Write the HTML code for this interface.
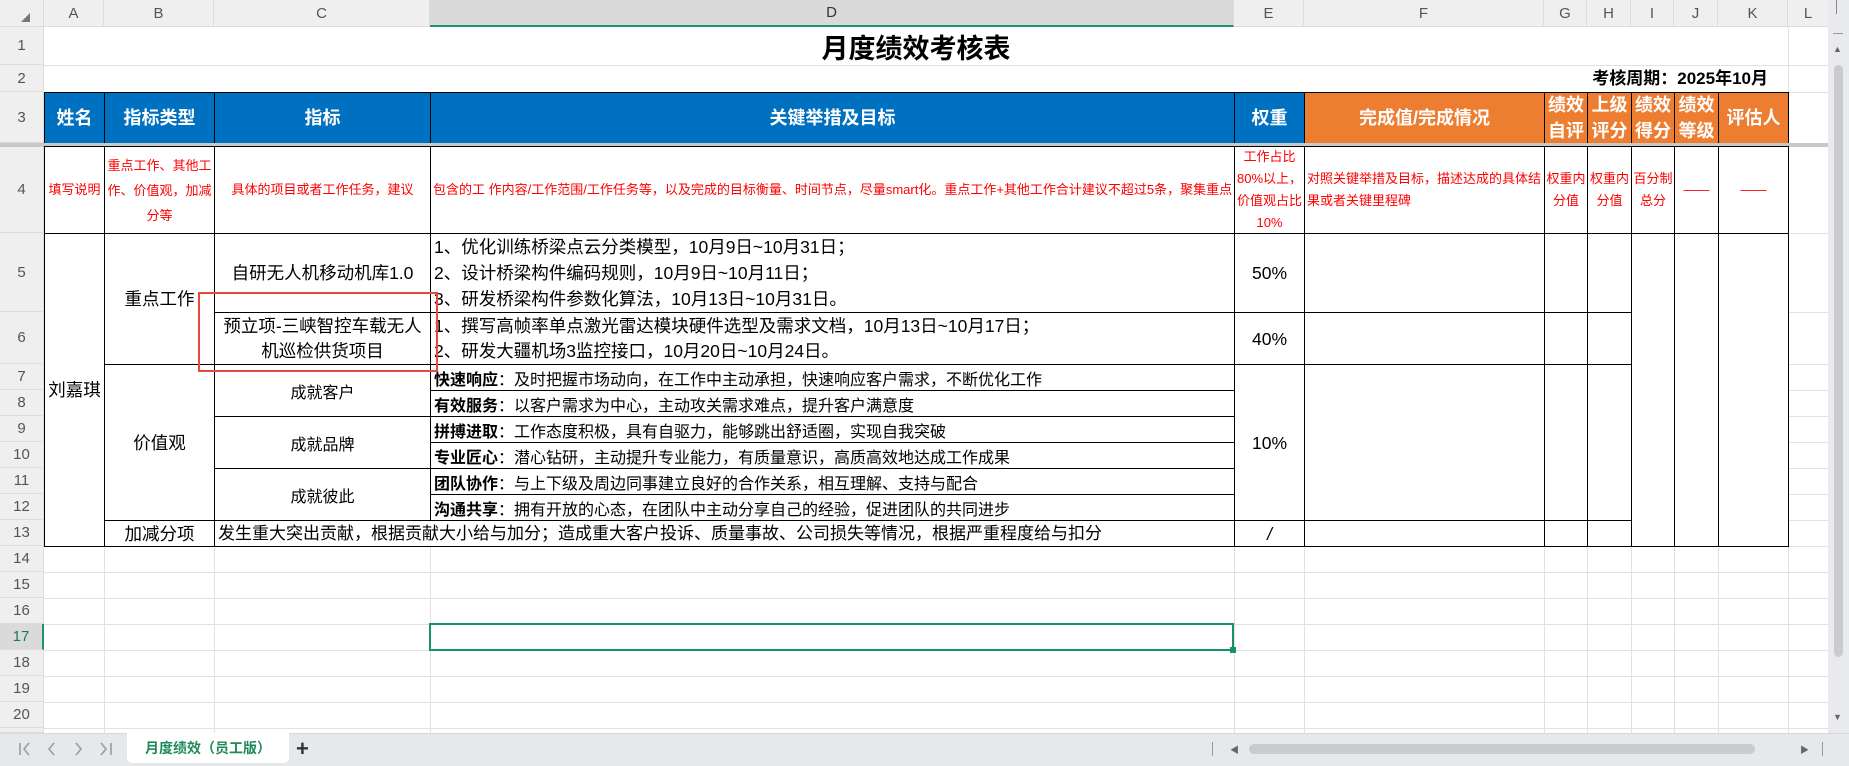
<!DOCTYPE html>
<html><head><meta charset="utf-8"><style>
*{margin:0;padding:0}
body{width:1849px;height:765px;overflow:hidden;background:#fff;position:relative;font-family:"Liberation Sans","Noto Sans CJK SC",sans-serif;color:#000}
.a{position:absolute}
.vl{position:absolute;top:27px;height:706px;width:1px;background:#e1e1e1}
.hl{position:absolute;left:0;width:1828px;height:1px;background:#e1e1e1}
.ch{position:absolute;top:0;height:27px;background:#efefef;color:#555;font-size:15px;display:flex;align-items:center;justify-content:center;border-right:1px solid #dcdcdc;box-sizing:border-box;border-bottom:1px solid #dcdcdc}
.rh{position:absolute;left:0;width:44px;background:#efefef;color:#555;font-size:15px;display:flex;align-items:center;justify-content:center;border-bottom:1px solid #dcdcdc;box-sizing:border-box;border-right:1px solid #dcdcdc}
.c{position:absolute;box-sizing:border-box;border:1px solid #000;display:flex;align-items:center;justify-content:center;text-align:center;overflow:hidden;background:#fff;white-space:nowrap}
.w{white-space:normal}
.b{background:#0070c0;color:#fff;font-weight:bold;font-size:18px;line-height:26px}
.o{background:#ed7d31;color:#fff;font-weight:bold;font-size:18px;line-height:26px}
.r{color:#f00;font-size:13px;line-height:22px}
.t{font-size:17.5px;line-height:26px}
.l{justify-content:flex-start;text-align:left;padding-left:4px}
.s{font-size:16px}
</style></head><body>
<div class="vl" style="left:104px"></div><div class="vl" style="left:214px"></div><div class="vl" style="left:430px"></div><div class="vl" style="left:1234px"></div><div class="vl" style="left:1304px"></div><div class="vl" style="left:1544px"></div><div class="vl" style="left:1587px"></div><div class="vl" style="left:1631px"></div><div class="vl" style="left:1674px"></div><div class="vl" style="left:1718px"></div><div class="vl" style="left:1788px"></div>
<div class="hl" style="top:65px"></div><div class="hl" style="top:92px"></div>
<div class="hl" style="top:572px"></div><div class="hl" style="top:598px"></div><div class="hl" style="top:624px"></div><div class="hl" style="top:650px"></div><div class="hl" style="top:676px"></div><div class="hl" style="top:702px"></div><div class="hl" style="top:728px"></div>
<div class="hl" style="top:390px;left:1788px;width:40px"></div><div class="hl" style="top:416px;left:1788px;width:40px"></div><div class="hl" style="top:442px;left:1788px;width:40px"></div><div class="hl" style="top:468px;left:1788px;width:40px"></div><div class="hl" style="top:494px;left:1788px;width:40px"></div><div class="hl" style="top:520px;left:1788px;width:40px"></div><div class="hl" style="top:546px"></div><div class="hl" style="top:233px;left:1788px;width:40px"></div><div class="hl" style="top:312px;left:1788px;width:40px"></div><div class="hl" style="top:364px;left:1788px;width:40px"></div>

<div class="ch" style="left:0;width:44px"><span style="font-size:9px;color:#777;margin:8px 0 0 8px">◢</span></div>
<div class="ch" style="left:44px;width:60px">A</div>
<div class="ch" style="left:104px;width:110px">B</div>
<div class="ch" style="left:214px;width:216px">C</div>
<div class="ch" style="left:430px;width:804px;background:#dadada;border-bottom:2px solid #1e9467;color:#333">D</div>
<div class="ch" style="left:1234px;width:70px">E</div>
<div class="ch" style="left:1304px;width:240px">F</div>
<div class="ch" style="left:1544px;width:43px">G</div>
<div class="ch" style="left:1587px;width:44px">H</div>
<div class="ch" style="left:1631px;width:43px">I</div>
<div class="ch" style="left:1674px;width:44px">J</div>
<div class="ch" style="left:1718px;width:70px">K</div>
<div class="ch" style="left:1788px;width:40px;border-right:none">L</div>
<div class="rh" style="top:27px;height:38px">1</div>
<div class="rh" style="top:65px;height:27px">2</div>
<div class="rh" style="top:92px;height:51px">3</div>
<div class="rh" style="top:147px;height:86px">4</div>
<div class="rh" style="top:233px;height:79px">5</div>
<div class="rh" style="top:312px;height:52px">6</div>
<div class="rh" style="top:364px;height:26px">7</div>
<div class="rh" style="top:390px;height:26px">8</div>
<div class="rh" style="top:416px;height:26px">9</div>
<div class="rh" style="top:442px;height:26px">10</div>
<div class="rh" style="top:468px;height:26px">11</div>
<div class="rh" style="top:494px;height:26px">12</div>
<div class="rh" style="top:520px;height:26px">13</div>
<div class="rh" style="top:546px;height:26px">14</div>
<div class="rh" style="top:572px;height:26px">15</div>
<div class="rh" style="top:598px;height:26px">16</div>
<div class="rh" style="top:624px;height:26px;background:#dadada;color:#1e7a55;border-right:2px solid #1e9467">17</div>
<div class="rh" style="top:650px;height:26px">18</div>
<div class="rh" style="top:676px;height:26px">19</div>
<div class="rh" style="top:702px;height:26px">20</div>
<div class="rh" style="top:728px;height:5px"></div>

<div class="a" style="left:44px;top:27px;width:1744px;height:38px;display:flex;align-items:center;justify-content:center;font-size:27px;font-weight:bold;background:#fff">月度绩效考核表</div>
<div class="a" style="left:44px;top:66px;width:1744px;height:26px;background:#fff"></div>
<div class="a" style="left:1500px;top:66px;width:268px;height:26px;text-align:right;font-size:17px;font-weight:bold;line-height:26px">考核周期：2025年10月</div>

<div class="c b" style="left:44px;top:92px;width:61px;height:52px">姓名</div>
<div class="c b" style="left:104px;top:92px;width:111px;height:52px">指标类型</div>
<div class="c b" style="left:214px;top:92px;width:217px;height:52px">指标</div>
<div class="c b" style="left:430px;top:92px;width:805px;height:52px">关键举措及目标</div>
<div class="c b" style="left:1234px;top:92px;width:71px;height:52px">权重</div>
<div class="c o" style="left:1304px;top:92px;width:241px;height:52px">完成值/完成情况</div>
<div class="c o" style="left:1544px;top:92px;width:44px;height:52px">绩效<br>自评</div>
<div class="c o" style="left:1587px;top:92px;width:45px;height:52px">上级<br>评分</div>
<div class="c o" style="left:1631px;top:92px;width:44px;height:52px">绩效<br>得分</div>
<div class="c o" style="left:1674px;top:92px;width:45px;height:52px">绩效<br>等级</div>
<div class="c o" style="left:1718px;top:92px;width:71px;height:52px">评估人</div>
<div class="a" style="left:0;top:143px;width:1828px;height:4px;background:#c8c8c8"></div>

<div class="c r" style="left:44px;top:146px;width:61px;height:88px">填写说明</div>
<div class="c r w" style="left:104px;top:146px;width:111px;height:88px;line-height:25px">重点工作、其他工作、价值观，加减分等</div>
<div class="c r" style="left:214px;top:146px;width:217px;height:88px">具体的项目或者工作任务，建议</div>
<div class="c r l w" style="left:430px;top:146px;width:805px;height:88px;padding-left:2px">包含的工 作内容/工作范围/工作任务等，以及完成的目标衡量、时间节点，尽量smart化。重点工作+其他工作合计建议不超过5条，聚集重点</div>
<div class="c r" style="left:1234px;top:146px;width:71px;height:88px">工作占比<br>80%以上，<br>价值观占比<br>10%</div>
<div class="c r l w" style="left:1304px;top:146px;width:241px;height:88px;padding-left:2px">对照关键举措及目标，描述达成的具体结果或者关键里程碑</div>
<div class="c r" style="left:1544px;top:146px;width:44px;height:88px">权重内<br>分值</div>
<div class="c r" style="left:1587px;top:146px;width:45px;height:88px">权重内<br>分值</div>
<div class="c r" style="left:1631px;top:146px;width:44px;height:88px">百分制<br>总分</div>
<div class="c r" style="left:1674px;top:146px;width:45px;height:88px">——</div>
<div class="c r" style="left:1718px;top:146px;width:71px;height:88px">——</div>

<div class="c t" style="left:44px;top:233px;width:61px;height:314px">刘嘉琪</div>
<div class="c t" style="left:104px;top:233px;width:111px;height:132px">重点工作</div>
<div class="c t" style="left:104px;top:364px;width:111px;height:157px">价值观</div>
<div class="c t" style="left:104px;top:520px;width:111px;height:27px">加减分项</div>
<div class="c t" style="left:214px;top:233px;width:217px;height:80px">自研无人机移动机库1.0</div>
<div class="c t" style="left:214px;top:312px;width:217px;height:53px;line-height:25px">预立项-三峡智控车载无人<br>机巡检供货项目</div>
<div class="c s" style="left:214px;top:364px;width:217px;height:53px">成就客户</div>
<div class="c s" style="left:214px;top:416px;width:217px;height:53px">成就品牌</div>
<div class="c s" style="left:214px;top:468px;width:217px;height:53px">成就彼此</div>
<div class="c t l" style="left:214px;top:520px;width:1021px;height:27px;padding-left:3px;font-size:17px">发生重大突出贡献，根据贡献大小给与加分；造成重大客户投诉、质量事故、公司损失等情况，根据严重程度给与扣分</div>
<div class="c t l" style="left:430px;top:233px;width:805px;height:80px;padding-left:3px">1、优化训练桥梁点云分类模型，10月9日~10月31日；<br>2、设计桥梁构件编码规则，10月9日~10月11日；<br>3、研发桥梁构件参数化算法，10月13日~10月31日。</div>
<div class="c t l" style="left:430px;top:312px;width:805px;height:53px;padding-left:3px;line-height:25px">1、撰写高帧率单点激光雷达模块硬件选型及需求文档，10月13日~10月17日；<br>2、研发大疆机场3监控接口，10月20日~10月24日。</div>
<div class="c s l" style="left:430px;top:364px;width:805px;height:27px;padding-left:3px"><b>快速响应</b>：及时把握市场动向，在工作中主动承担，快速响应客户需求，不断优化工作</div>
<div class="c s l" style="left:430px;top:390px;width:805px;height:27px;padding-left:3px"><b>有效服务</b>：以客户需求为中心，主动攻关需求难点，提升客户满意度</div>
<div class="c s l" style="left:430px;top:416px;width:805px;height:27px;padding-left:3px"><b>拼搏进取</b>：工作态度积极，具有自驱力，能够跳出舒适圈，实现自我突破</div>
<div class="c s l" style="left:430px;top:442px;width:805px;height:27px;padding-left:3px"><b>专业匠心</b>：潜心钻研，主动提升专业能力，有质量意识，高质高效地达成工作成果</div>
<div class="c s l" style="left:430px;top:468px;width:805px;height:27px;padding-left:3px"><b>团队协作</b>：与上下级及周边同事建立良好的合作关系，相互理解、支持与配合</div>
<div class="c s l" style="left:430px;top:494px;width:805px;height:27px;padding-left:3px"><b>沟通共享</b>：拥有开放的心态，在团队中主动分享自己的经验，促进团队的共同进步</div>
<div class="c t" style="left:1234px;top:233px;width:71px;height:80px">50%</div>
<div class="c t" style="left:1234px;top:312px;width:71px;height:53px">40%</div>
<div class="c t" style="left:1234px;top:364px;width:71px;height:157px">10%</div>
<div class="c t" style="left:1234px;top:520px;width:71px;height:27px"><i>/</i></div>
<div class="c" style="left:1304px;top:233px;width:241px;height:80px"></div>
<div class="c" style="left:1304px;top:312px;width:241px;height:53px"></div>
<div class="c" style="left:1304px;top:364px;width:241px;height:157px"></div>
<div class="c" style="left:1304px;top:520px;width:241px;height:27px"></div>
<div class="c" style="left:1544px;top:233px;width:44px;height:80px"></div>
<div class="c" style="left:1544px;top:312px;width:44px;height:53px"></div>
<div class="c" style="left:1544px;top:364px;width:44px;height:157px"></div>
<div class="c" style="left:1544px;top:520px;width:44px;height:27px"></div>
<div class="c" style="left:1587px;top:233px;width:45px;height:80px"></div>
<div class="c" style="left:1587px;top:312px;width:45px;height:53px"></div>
<div class="c" style="left:1587px;top:364px;width:45px;height:157px"></div>
<div class="c" style="left:1587px;top:520px;width:45px;height:27px"></div>
<div class="c" style="left:1631px;top:233px;width:44px;height:314px"></div>
<div class="c" style="left:1674px;top:233px;width:45px;height:314px"></div>
<div class="c" style="left:1718px;top:233px;width:71px;height:314px"></div>

<div class="a" style="left:198px;top:292px;width:240px;height:80px;border:2px solid #e8483f;box-sizing:border-box"></div>
<div class="a" style="left:429px;top:623px;width:805px;height:28px;border:2px solid #169363;box-sizing:border-box"></div>
<div class="a" style="left:1230px;top:647px;width:6px;height:6px;background:#169363"></div>

<div class="a" style="left:1828px;top:0;width:21px;height:733px;background:#e9eaee"></div>
<div class="a" style="left:1836px;top:0;width:1px;height:14px;background:#888"></div>
<div class="a" style="left:1833px;top:33px;width:10px;height:1px;background:#999"></div>
<div class="a" style="left:1833px;top:44px;font-size:9px;color:#666">▲</div>
<div class="a" style="left:1834px;top:65px;width:9px;height:592px;background:#c9cbcf;border-radius:5px"></div>
<div class="a" style="left:1833px;top:712px;font-size:9px;color:#666">▼</div>

<div class="a" style="left:0;top:733px;width:1849px;height:32px;background:#e6e8ec;border-top:1px solid #d8d8d8"></div>
<svg class="a" style="left:14px;top:740px" width="110" height="18" viewBox="0 0 110 18" fill="none" stroke="#9a9ca0" stroke-width="1.6">
<path d="M6 3v12M15 3l-5 6 5 6"/>
<path d="M40 3l-5 6 5 6"/>
<path d="M62 3l5 6-5 6"/>
<path d="M87 3l5 6-5 6M97 3v12"/>
</svg>
<div class="a" style="left:127px;top:733px;width:162px;height:30px;background:#fff;border-radius:0 0 5px 5px;color:#1e8a5a;font-weight:bold;font-size:14px;display:flex;align-items:center;justify-content:center">月度绩效（员工版）</div>
<div class="a" style="left:296px;top:736px;font-size:22px;font-weight:bold;color:#333">+</div>
<div class="a" style="left:1212px;top:742px;width:1px;height:14px;background:#999"></div>
<div class="a" style="left:1230px;top:743px;font-size:9px;color:#666">◀</div>
<div class="a" style="left:1249px;top:744px;width:506px;height:10px;background:#c9cbcf;border-radius:5px"></div>
<div class="a" style="left:1800px;top:743px;font-size:9px;color:#666">▶</div>
<div class="a" style="left:1822px;top:742px;width:1px;height:14px;background:#999"></div>
</body></html>
